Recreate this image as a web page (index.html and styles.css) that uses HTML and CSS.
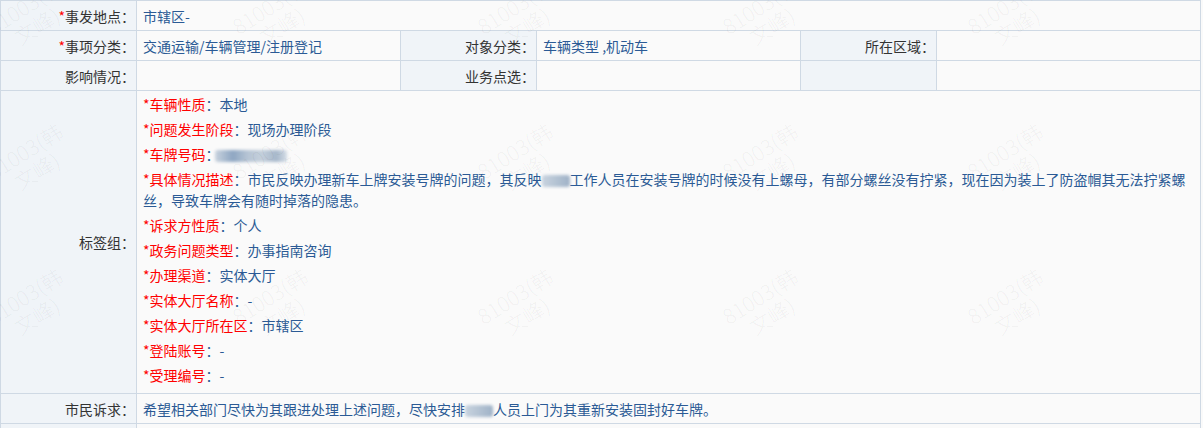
FILE: index.html
```html
<!DOCTYPE html>
<html lang="zh-CN">
  <head>
    <meta charset="UTF-8" />
    <meta name="viewport" content="width=device-width, initial-scale=1.0" />
    <title>事项详情</title>
    <link rel="stylesheet" href="styles.css">
  </head>
  <body>
    <div class="page">
      <table class="detail">
        <colgroup>
          <col class="col-label" />
          <col class="col-value" />
          <col class="col-label" />
          <col class="col-value" />
          <col class="col-label" />
          <col class="col-value" />
        </colgroup>
        <tr>
          <td class="label"><span class="req">*</span>事发地点：</td>
          <td class="value" colspan="5">市辖区-</td>
        </tr>
        <tr>
          <td class="label"><span class="req">*</span>事项分类：</td>
          <td class="value">交通运输/车辆管理/注册登记</td>
          <td class="label">对象分类：</td>
          <td class="value">车辆类型 ,机动车</td>
          <td class="label">所在区域：</td>
          <td class="value"></td>
        </tr>
        <tr>
          <td class="label">影响情况：</td>
          <td class="value"></td>
          <td class="label">业务点选：</td>
          <td class="value"></td>
          <td class="label"></td>
          <td class="value"></td>
        </tr>
        <tr>
          <td class="label">标签组：</td>
          <td class="value tags" colspan="5">
            <div class="tag"><span class="key">*车辆性质</span>：本地</div>
            <div class="tag"><span class="key">*问题发生阶段</span>：现场办理阶段</div>
            <div class="tag"><span class="key">*车牌号码</span>：<span class="blur plate"></span></div>
            <div class="tag"><span class="key">*具体情况描述</span>：市民反映办理新车上牌安装号牌的问题，其反映<span class="blur short"></span>工作人员在安装号牌的时候没有上螺母，有部分螺丝没有拧紧，现在因为装上了防盗帽其无法拧紧螺丝，导致车牌会有随时掉落的隐患。</div>
            <div class="tag"><span class="key">*诉求方性质</span>：个人</div>
            <div class="tag"><span class="key">*政务问题类型</span>：办事指南咨询</div>
            <div class="tag"><span class="key">*办理渠道</span>：实体大厅</div>
            <div class="tag"><span class="key">*实体大厅名称</span>：-</div>
            <div class="tag"><span class="key">*实体大厅所在区</span>：市辖区</div>
            <div class="tag"><span class="key">*登陆账号</span>：-</div>
            <div class="tag"><span class="key">*受理编号</span>：-</div>
          </td>
        </tr>
        <tr>
          <td class="label">市民诉求：</td>
          <td class="value" colspan="5">希望相关部门尽快为其跟进处理上述问题，尽快安排<span class="blur short"></span>人员上门为其重新安装固封好车牌。</td>
        </tr>
        <tr>
          <td class="label"></td>
          <td class="value" colspan="5"></td>
        </tr>
      </table>

      <div class="watermark">
        <span class="wm">81003(韩<br />文峰)</span>
        <span class="wm">81003(韩<br />文峰)</span>
        <span class="wm">81003(韩<br />文峰)</span>
        <span class="wm">81003(韩<br />文峰)</span>
        <span class="wm">81003(韩<br />文峰)</span>
        <span class="wm">81003(韩<br />文峰)</span>
        <span class="wm">81003(韩<br />文峰)</span>
        <span class="wm">81003(韩<br />文峰)</span>
        <span class="wm">81003(韩<br />文峰)</span>
        <span class="wm">81003(韩<br />文峰)</span>
        <span class="wm">81003(韩<br />文峰)</span>
        <span class="wm">81003(韩<br />文峰)</span>
        <span class="wm">81003(韩<br />文峰)</span>
        <span class="wm">81003(韩<br />文峰)</span>
        <span class="wm">81003(韩<br />文峰)</span>
      </div>
    </div>
  </body>
</html>
```

FILE: styles.css
```css
body {
  margin: 0;
  background-color: #fafafa;
  font-family: "Noto Sans CJK SC", "Liberation Sans", sans-serif;
  font-size: 14px;
  color: #333;
}
.page {
  position: relative;
  overflow: hidden;
  height: 428px;
}
.detail {
  width: 1201px;
  table-layout: fixed;
  border-collapse: collapse;
}
.col-label {
  width: 136px;
}
.col-value {
  width: 264px;
}
.detail td {
  border: 1px solid #cfd9e4;
  height: 30px;
  padding: 0 6px;
  line-height: 20px;
  box-sizing: border-box;
}
.label {
  background-color: #f0f4f8;
  text-align: right;
  padding-right: 1px !important;
  color: #333;
}
.value {
  background-color: #fafafa;
  color: #2b5a95;
}
.req {
  color: #ff0000;
}
.detail td.tags {
  padding: 3px 6px 4px 6px;
}
.tag {
  line-height: 21px;
  margin-bottom: 4px;
  color: #2b5a95;
}
.tag:last-child {
  margin-bottom: 3px;
}
.key {
  color: #ff0000;
}
.blur {
  display: inline-block;
  vertical-align: middle;
  height: 12px;
  border-radius: 3px;
  filter: blur(1.5px);
  background: linear-gradient(90deg, #c9d3de 0%, #8ea6c2 25%, #b6c4d4 45%, #c4cfdb 65%, #a6b7ca 85%, #d5dde6 100%);
}
.plate {
  width: 72px;
  margin-left: -5px;
}
.short {
  width: 28px;
  background: linear-gradient(90deg, #c8d3df 0%, #b4c3d3 50%, #9fb2c7 100%);
}
.watermark {
  position: absolute;
  left: -92px;
  top: -57px;
  display: grid;
  grid-template-columns: repeat(5, 245px);
  grid-auto-rows: 145px;
  pointer-events: none;
}
.wm {
  display: flex;
  align-items: center;
  justify-content: center;
  text-align: center;
  transform: rotate(-32deg);
  font-size: 21px;
  line-height: 23px;
  font-weight: 300;
  color: rgba(0, 0, 0, 0.05);
}
```
